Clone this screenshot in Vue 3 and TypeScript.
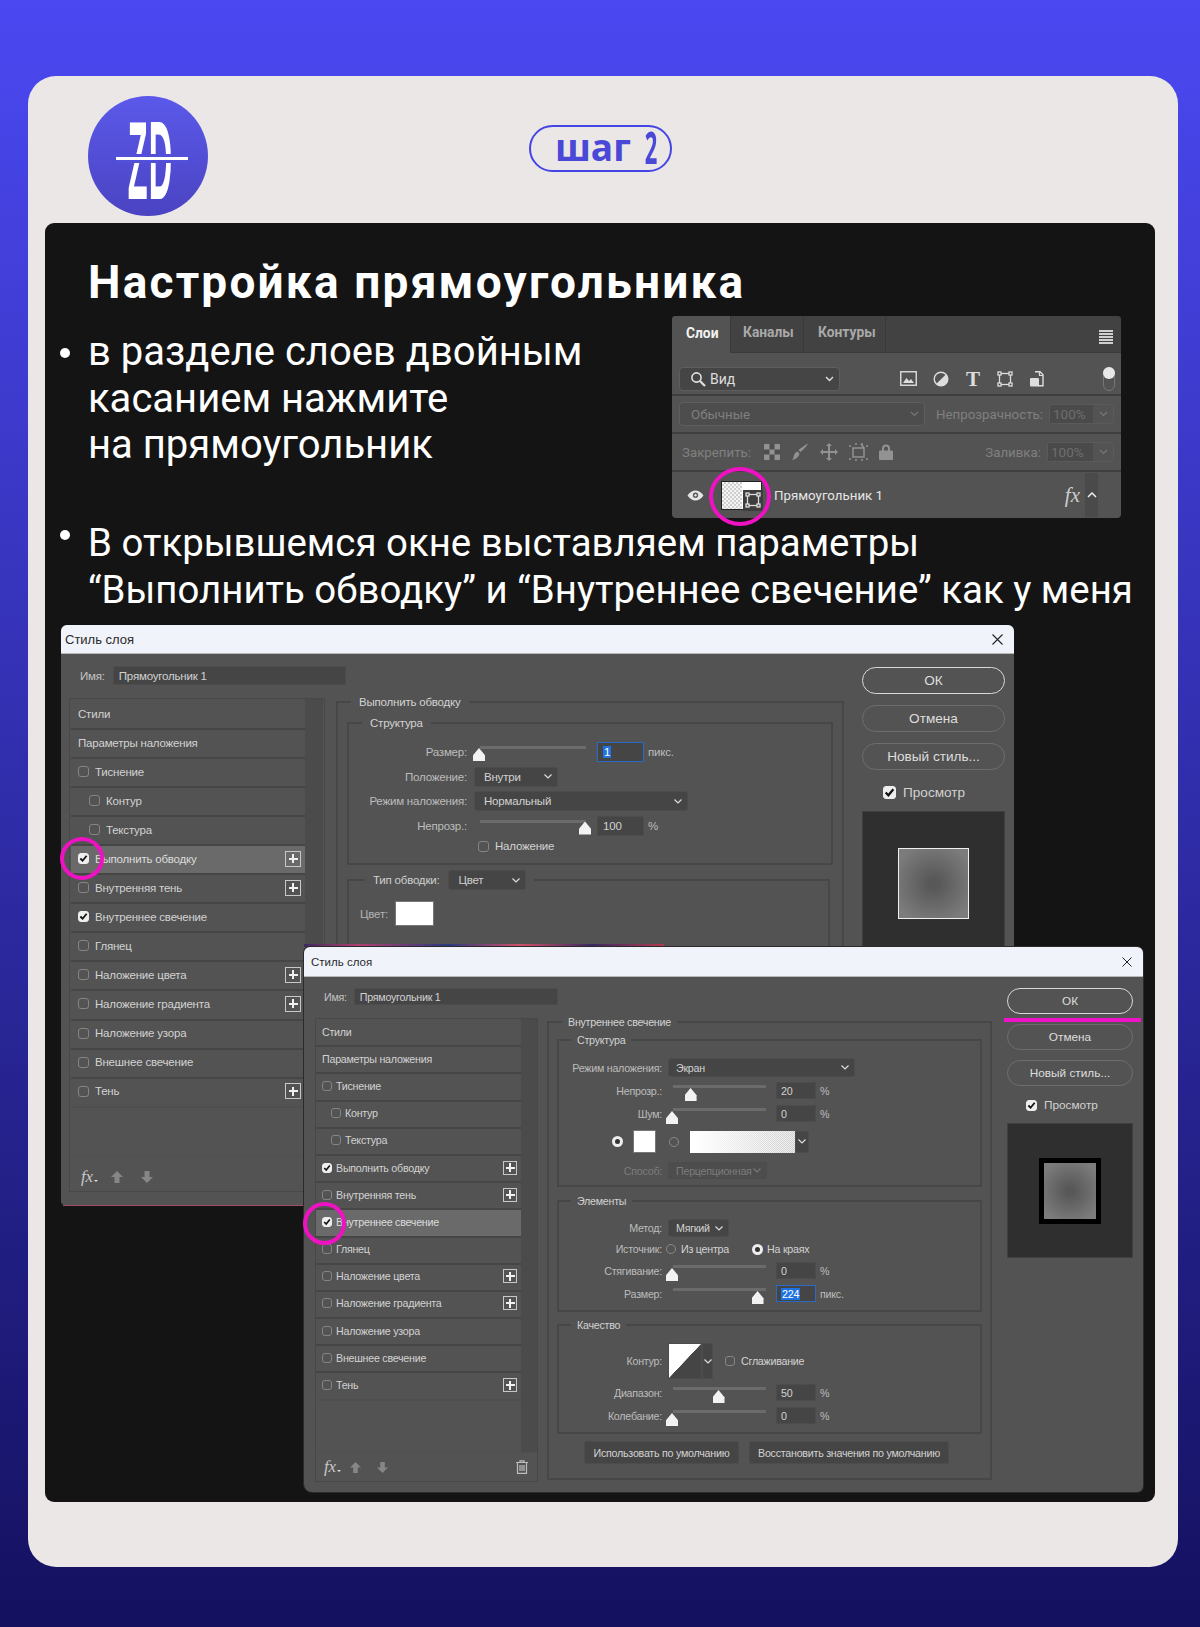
<template>
  <div class="page">
    <main class="card">
      <header class="top">
        <div class="logo">
          <span class="logo-text">ZD</span>
          <i class="logo-line"></i>
        </div>
        <div class="pill">шаг <span class="pill-num">2</span></div>
      </header>

      <section class="panel">
        <h1 class="title">Настройка прямоугольника</h1>

        <div class="intro">
          <p class="para first">в разделе слоев двойным<br />касанием нажмите<br />на прямоугольник</p>

          <!-- панель слоёв -->
          <div class="layers">
            <div class="tabs">
              <span class="tab on">Слои</span>
              <span class="tab t2">Каналы</span>
              <span class="tab t3">Контуры</span>
              <span class="menu"><i v-for="n in 5" :key="n"></i></span>
            </div>
            <div class="lrow r-filter">
              <div class="drop search">
                <svg width="16" height="16" viewBox="0 0 16 16" fill="none" stroke="#e0e0e0" stroke-width="1.6"><circle cx="6.5" cy="6.5" r="4.6" /><path d="M10 10l5 5" stroke-width="2.2" /></svg>
                <span>Вид</span>
                <svg class="chev" width="9" height="6" viewBox="0 0 9 6" fill="none" stroke="#e0e0e0" stroke-width="1.4"><path d="M1 1l3.5 3.5L8 1" /></svg>
              </div>
              <div class="filter-icons">
                <svg width="17" height="15" viewBox="0 0 17 15"><rect x=".75" y=".75" width="15.5" height="13.5" fill="none" stroke="#ddd" stroke-width="1.4" /><path d="M3 12l3.5-5 2.5 3 2-2 3 4z" fill="#ddd" /></svg>
                <svg width="16" height="16" viewBox="0 0 16 16"><circle cx="8" cy="8" r="6.8" fill="none" stroke="#ddd" stroke-width="1.4" /><path d="M13 3.2A6.8 6.8 0 0 1 3.2 13z" fill="#ddd" /></svg>
                <span class="t-icon">T</span>
                <svg width="16" height="16" viewBox="0 0 16 16" fill="#444" stroke="#ddd" stroke-width="1.3"><rect x="2.5" y="2.5" width="11" height="11" fill="none" /><rect x="1" y="1" width="3" height="3" /><rect x="12" y="1" width="3" height="3" /><rect x="1" y="12" width="3" height="3" /><rect x="12" y="12" width="3" height="3" /></svg>
                <svg width="15" height="16" viewBox="0 0 15 16"><path d="M6 .8h5l3 3v11H9" fill="none" stroke="#ddd" stroke-width="1.4" /><path d="M10.500 1v3.500H14" fill="none" stroke="#ddd" stroke-width="1.2" /><rect x="1" y="7" width="9" height="8.5" rx="1" fill="#ddd" /></svg>
              </div>
              <span class="switch"><i></i></span>
            </div>
            <div class="lrow r-blend">
              <div class="drop blend dim">
                <span>Обычные</span>
                <svg class="chev" width="9" height="6" viewBox="0 0 9 6" fill="none" stroke="#777" stroke-width="1.2"><path d="M1 1l3.5 3.5L8 1" /></svg>
              </div>
              <span class="dim-label op">Непрозрачность:</span>
              <div class="pct"><span>100%</span><b><svg width="9" height="6" viewBox="0 0 9 6" fill="none" stroke="#777" stroke-width="1.2"><path d="M1 1l3.5 3.5L8 1" /></svg></b></div>
            </div>
            <div class="lrow r-lock">
              <span class="dim-label lock-label">Закрепить:</span>
              <div class="lock-icons">
                <svg width="16" height="16" viewBox="0 0 16 16"><rect width="16" height="16" rx="1" fill="#929292" /><path d="M5.500 0h5v5.500h-5zM0 5.500h5.500v5H0zM10.500 5.500H16v5h-5.500zM5.500 10.500h5V16h-5z" fill="#4e4e4e" /></svg>
                <svg width="18" height="18" viewBox="0 0 18 18" fill="#929292"><path d="M17 .5c-1 2.500-4.500 6-7.500 8.500l-2-1.800C10 5 14.500 1.500 17 .5zM6.500 8.500l2 2c-.6 3-3 5.800-7.500 6.500 1.800-1.500 1.300-3.500 2.300-5.500.6-1.500 1.800-2.600 3.200-3z" /></svg>
                <svg width="18" height="18" viewBox="0 0 18 18" fill="#929292"><path d="M9 0l3 3h-2v5h5V6l3 3-3 3v-2h-5v5h2l-3 3-3-3h2v-5H3v2L0 9l3-3v2h5V3H6z" /></svg>
                <svg width="19" height="18" viewBox="0 0 19 18" fill="none" stroke="#929292" stroke-width="1.5"><path d="M4 5h11v9H4z" /><path d="M0 3h2M6 1h2M12 1h2M17 3h2M0 16h2M6 17h2M12 17h2M17 16h2" stroke-dasharray="2 1" /><path d="M12 1l3 4" /></svg>
                <svg width="14" height="16" viewBox="0 0 14 16" fill="#929292"><path d="M3 7V4.500a4 4 0 0 1 8 0V7H9V4.500a2 2 0 0 0-4 0V7z" /><rect y="6.500" width="14" height="9.500" rx="1" /></svg>
              </div>
              <span class="dim-label fill">Заливка:</span>
              <div class="pct"><span>100%</span><b><svg width="9" height="6" viewBox="0 0 9 6" fill="none" stroke="#777" stroke-width="1.2"><path d="M1 1l3.5 3.5L8 1" /></svg></b></div>
            </div>
            <div class="layer-row">
              <svg class="eye" width="17" height="11" viewBox="0 0 17 11"><path d="M.5 5.500C3 2 5.500.5 8.500.5s5.500 1.500 8 5c-2.500 3.500-5 5-8 5s-5.500-1.500-8-5z" fill="#e6e6e6" /><circle cx="8.500" cy="5.200" r="2.600" fill="#535353" /><circle cx="8.500" cy="5.200" r="1.200" fill="#e6e6e6" /></svg>
              <div class="thumb-layer">
                <span class="shape-tag">
                  <svg width="16" height="16" viewBox="0 0 16 16" fill="#444" stroke="#ddd" stroke-width="1.3"><rect x="2.500" y="2.500" width="11" height="11" fill="none" /><rect x="1" y="1" width="3" height="3" /><rect x="12" y="1" width="3" height="3" /><rect x="1" y="12" width="3" height="3" /><rect x="12" y="12" width="3" height="3" /></svg>
                </span>
              </div>
              <span class="layer-name">Прямоугольник 1</span>
              <span class="fx-mark">fx</span>
              <span class="collapse"><svg width="10" height="6" viewBox="0 0 10 6" fill="none" stroke="#eee" stroke-width="1.5"><path d="M1 5l4-4 4 4" /></svg></span>
            </div>
            <i class="ring ring-layer"></i>
          </div>
        </div>

        <p class="para second">В открывшемся окне выставляем параметры<br />“Выполнить обводку” и “Внутреннее свечение” как у меня</p>

        <div class="stage">
          <!-- первое окно -->
          <div class="dlg dlg-a">
            <div class="dlg-title"><span>Стиль слоя</span><svg width="11" height="11" viewBox="0 0 11 11" stroke="#222" stroke-width="1.1"><path d="M.5.5l10 10M10.500.5l-10 10" /></svg></div>
            <div class="dlg-body">
              <div class="dlg-left">
                <div class="name-row"><span class="name-label">Имя:</span><span class="name-input">Прямоугольник 1</span></div>
                <div class="dlg-main">
                  <div class="fx-panel">
                    <ul class="fx-list">
                      <li v-for="row in rowsA" :key="row.label" class="fx-row" :class="{ indent: row.indent, active: row.active }">
                        <span v-if="row.box" class="box" :class="{ on: row.on }"><svg v-if="row.on" viewBox="0 0 10 10" fill="none" stroke="#111" stroke-width="2"><path d="M1.500 5l2.500 2.500L8.500 2" /></svg></span>
                        <span>{{ row.label }}</span>
                        <span v-if="row.plus" class="plus"></span>
                      </li>
                    </ul>
                    <div class="scroll-col"></div>
                    <div class="fx-foot">
                      <span class="fx-btn">fx</span>
                      <svg class="arrow first-arrow" width="12" height="12" viewBox="0 0 12 12" fill="#868686"><path d="M6 0l6 6H8.500v6h-5V6H0z" /></svg>
                      <svg class="arrow" width="12" height="12" viewBox="0 0 12 12" fill="#868686"><path d="M6 12l6-6H8.500V0h-5v6H0z" /></svg>
                    </div>
                  </div>

                  <fieldset class="group">
                    <legend>Выполнить обводку</legend>
                    <fieldset class="sub struct-a">
                      <legend>Структура</legend>
                      <div class="frow">
                        <span class="flabel">Размер:</span>
                        <div class="slider gap-slider"><i class="knob" :style="{ left: '0%' }"></i></div>
                        <span class="num sel"><em>1</em></span><span class="unit">пикс.</span>
                      </div>
                      <div class="frow">
                        <span class="flabel">Положение:</span>
                        <span class="select w-pos">Внутри<svg width="8" height="5" viewBox="0 0 8 5" fill="none" stroke="#ddd" stroke-width="1.2"><path d="M.5.5L4 4 7.500.5" /></svg></span>
                      </div>
                      <div class="frow">
                        <span class="flabel">Режим наложения:</span>
                        <span class="select w-mode">Нормальный<svg width="8" height="5" viewBox="0 0 8 5" fill="none" stroke="#ddd" stroke-width="1.2"><path d="M.5.5L4 4 7.500.5" /></svg></span>
                      </div>
                      <div class="frow">
                        <span class="flabel">Непрозр.:</span>
                        <div class="slider gap-slider"><i class="knob" :style="{ left: '100%' }"></i></div>
                        <span class="num">100</span><span class="unit">%</span>
                      </div>
                      <div class="frow low">
                        <span class="flabel"></span>
                        <span class="box overlay-box"></span><span>Наложение</span>
                      </div>
                    </fieldset>
                    <fieldset class="sub type-a">
                      <legend>
                        <span>Тип обводки:</span>
                        <span class="select w-type">Цвет<svg width="8" height="5" viewBox="0 0 8 5" fill="none" stroke="#ddd" stroke-width="1.2"><path d="M.5.5L4 4 7.500.5" /></svg></span>
                      </legend>
                      <div class="color-row"><span class="color-label">Цвет:</span><i class="swatch"></i></div>
                    </fieldset>
                  </fieldset>
                </div>
              </div>

              <div class="dlg-right">
                <span class="btn ok">ОК</span>
                <span class="btn">Отмена</span>
                <span class="btn">Новый стиль...</span>
                <div class="preview-check"><span class="box on"><svg viewBox="0 0 10 10" fill="none" stroke="#111" stroke-width="2"><path d="M1.500 5l2.500 2.500L8.500 2" /></svg></span>Просмотр</div>
                <div class="preview"><i class="sample"></i></div>
              </div>
            </div>
            <i class="ring ring-a"></i>
            <i class="bleed"></i>
          </div>

          <!-- второе окно -->
          <div class="dlg dlg-b">
            <div class="dlg-title"><span>Стиль слоя</span><svg width="10" height="10" viewBox="0 0 10 10" stroke="#222" stroke-width="1"><path d="M.5.5l9 9M9.500.5l-9 9" /></svg></div>
            <div class="dlg-body">
              <div class="dlg-left">
                <div class="name-row"><span class="name-label">Имя:</span><span class="name-input">Прямоугольник 1</span></div>
                <div class="dlg-main">
                  <div class="fx-panel">
                    <ul class="fx-list">
                      <li v-for="row in rowsB" :key="row.label" class="fx-row" :class="{ indent: row.indent, active: row.active }">
                        <span v-if="row.box" class="box" :class="{ on: row.on }"><svg v-if="row.on" viewBox="0 0 10 10" fill="none" stroke="#111" stroke-width="2"><path d="M1.500 5l2.500 2.500L8.500 2" /></svg></span>
                        <span>{{ row.label }}</span>
                        <span v-if="row.plus" class="plus"></span>
                      </li>
                    </ul>
                    <div class="scroll-col"></div>
                    <div class="fx-foot">
                      <span class="fx-btn">fx</span>
                      <svg class="arrow first-arrow" width="11" height="11" viewBox="0 0 12 12" fill="#868686"><path d="M6 0l6 6H8.500v6h-5V6H0z" /></svg>
                      <svg class="arrow" width="11" height="11" viewBox="0 0 12 12" fill="#868686"><path d="M6 12l6-6H8.500V0h-5v6H0z" /></svg>
                      <svg class="trash" width="12" height="14" viewBox="0 0 12 14" fill="none" stroke="#bdbdbd" stroke-width="1.200"><path d="M0 2.500h12M4 2.500V.8h4v1.700" /><path d="M1.500 2.500h9V13.300h-9zM4 5v6M6 5v6M8 5v6" /></svg>
                    </div>
                  </div>

                  <fieldset class="group">
                    <legend>Внутреннее свечение</legend>
                    <fieldset class="sub struct-b">
                      <legend>Структура</legend>
                      <div class="frow h19">
                        <span class="flabel">Режим наложения:</span>
                        <span class="select w-screen">Экран<svg width="8" height="5" viewBox="0 0 8 5" fill="none" stroke="#ddd" stroke-width="1.2"><path d="M.5.5L4 4 7.500.5" /></svg></span>
                      </div>
                      <div class="frow mt5">
                        <span class="flabel">Непрозр.:</span>
                        <div class="slider"><i class="knob" :style="{ left: '20%' }"></i></div>
                        <span class="num">20</span><span class="unit">%</span>
                      </div>
                      <div class="frow mt6">
                        <span class="flabel">Шум:</span>
                        <div class="slider"><i class="knob" :style="{ left: '0%' }"></i></div>
                        <span class="num">0</span><span class="unit">%</span>
                      </div>
                      <div class="fill-row">
                        <i class="radio on"></i>
                        <i class="swatch"></i>
                        <i class="radio second-radio"></i>
                        <i class="grad"></i>
                        <i class="grad-drop"><svg width="8" height="5" viewBox="0 0 8 5" fill="none" stroke="#ddd" stroke-width="1.2"><path d="M.5.5L4 4 7.500.5" /></svg></i>
                      </div>
                      <div class="frow mt9 disabled">
                        <span class="flabel">Способ:</span>
                        <span class="select w-way">Перцепционная<svg width="8" height="5" viewBox="0 0 8 5" fill="none" stroke="#777" stroke-width="1.2"><path d="M.5.5L4 4 7.500.5" /></svg></span>
                      </div>
                    </fieldset>

                    <fieldset class="sub elems-b">
                      <legend>Элементы</legend>
                      <div class="frow h18">
                        <span class="flabel">Метод:</span>
                        <span class="select w-method">Мягкий<svg width="8" height="5" viewBox="0 0 8 5" fill="none" stroke="#ddd" stroke-width="1.2"><path d="M.5.5L4 4 7.500.5" /></svg></span>
                      </div>
                      <div class="frow mt5 h14">
                        <span class="flabel">Источник:</span>
                        <i class="radio src-radio"></i><span class="src-text">Из центра</span>
                        <i class="radio on src-radio2"></i><span>На краях</span>
                      </div>
                      <div class="frow mt6">
                        <span class="flabel">Стягивание:</span>
                        <div class="slider"><i class="knob" :style="{ left: '0%' }"></i></div>
                        <span class="num">0</span><span class="unit">%</span>
                      </div>
                      <div class="frow mt6">
                        <span class="flabel">Размер:</span>
                        <div class="slider"><i class="knob" :style="{ left: '92%' }"></i></div>
                        <span class="num sel"><em>224</em></span><span class="unit">пикс.</span>
                      </div>
                    </fieldset>

                    <fieldset class="sub quality-b">
                      <legend>Качество</legend>
                      <div class="frow h36">
                        <span class="flabel">Контур:</span>
                        <i class="curve"></i>
                        <i class="curve-drop"><svg width="8" height="5" viewBox="0 0 8 5" fill="none" stroke="#ddd" stroke-width="1.2"><path d="M.5.5L4 4 7.500.5" /></svg></i>
                        <span class="box aa-box"></span><span>Сглаживание</span>
                      </div>
                      <div class="frow mt5">
                        <span class="flabel">Диапазон:</span>
                        <div class="slider"><i class="knob" :style="{ left: '50%' }"></i></div>
                        <span class="num">50</span><span class="unit">%</span>
                      </div>
                      <div class="frow mt6">
                        <span class="flabel">Колебание:</span>
                        <div class="slider"><i class="knob" :style="{ left: '0%' }"></i></div>
                        <span class="num">0</span><span class="unit">%</span>
                      </div>
                    </fieldset>

                    <div class="default-btns">
                      <span class="dbtn use">Использовать по умолчанию</span>
                      <span class="dbtn reset">Восстановить значения по умолчанию</span>
                    </div>
                  </fieldset>
                </div>
              </div>

              <div class="dlg-right">
                <span class="btn ok">ОК</span>
                <i class="ok-mark"></i>
                <span class="btn">Отмена</span>
                <span class="btn">Новый стиль...</span>
                <div class="preview-check"><span class="box on"><svg viewBox="0 0 10 10" fill="none" stroke="#111" stroke-width="2"><path d="M1.500 5l2.500 2.500L8.500 2" /></svg></span>Просмотр</div>
                <div class="preview"><i class="sample"></i></div>
              </div>
            </div>
            <i class="ring ring-b"></i>
          </div>
        </div>
      </section>
    </main>
  </div>
</template>

<script setup lang="ts">
interface StyleRow {
  label: string
  box?: boolean
  on?: boolean
  indent?: boolean
  plus?: boolean
  active?: boolean
}

const baseRows: StyleRow[] = [
  { label: 'Стили' },
  { label: 'Параметры наложения' },
  { label: 'Тиснение', box: true },
  { label: 'Контур', box: true, indent: true },
  { label: 'Текстура', box: true, indent: true },
  { label: 'Выполнить обводку', box: true, on: true, plus: true },
  { label: 'Внутренняя тень', box: true, plus: true },
  { label: 'Внутреннее свечение', box: true, on: true },
  { label: 'Глянец', box: true },
  { label: 'Наложение цвета', box: true, plus: true },
  { label: 'Наложение градиента', box: true, plus: true },
  { label: 'Наложение узора', box: true },
  { label: 'Внешнее свечение', box: true },
  { label: 'Тень', box: true, plus: true },
]

// в каждом окне подсвечена своя строка
const withActive = (label: string): StyleRow[] =>
  baseRows.map(row => ({ ...row, active: row.label === label }))

const rowsA = withActive('Выполнить обводку')
const rowsB = withActive('Внутреннее свечение')
</script>

<style>
html,
body {
  margin: 0;
  padding: 0;
}
</style>

<style scoped>
.page {
  height: 1627px;
  padding: 76px 22px 60px 28px;
  box-sizing: border-box;
  background: linear-gradient(180deg, #4b48f2 0%, #141160 100%);
  font-family: Roboto, "Liberation Sans", sans-serif;
}

.card {
  height: 1491px;
  box-sizing: border-box;
  padding: 20px 23px 65px 17px;
  background: #ebe7e6;
  border-radius: 28px;
}

/* ----- шапка ----- */
.top {
  display: flex;
  height: 127px;
  padding-left: 43px;
}

.logo {
  position: relative;
  flex: none;
  width: 120px;
  height: 120px;
  border-radius: 50%;
  background: linear-gradient(180deg, #5b59ea, #4a43c2);
  display: flex;
  align-items: center;
  justify-content: center;
}

.logo-text {
  flex: none;
  font-family: "Liberation Sans", sans-serif;
  font-weight: 700;
  font-size: 112px;
  line-height: 112px;
  color: #fff;
  transform: translate(3px, 5px) scaleX(0.29);
  letter-spacing: 4px;
}

.logo-line {
  position: absolute;
  left: 28px;
  right: 20px;
  top: 61px;
  height: 3px;
  background: #fff;
  box-shadow: 0 -3px 0 #5250d8, 0 3px 0 #5250d8;
}

.pill {
  margin: 29px 0 0 321px;
  width: 143px;
  height: 47px;
  box-sizing: border-box;
  border: 2.500px solid #4545e6;
  border-radius: 24px;
  display: flex;
  align-items: center;
  gap: 14px;
  padding: 0 0 4px 24px;
  font-family: "Open Sans", sans-serif;
  font-weight: 700;
  font-size: 37px;
  line-height: 1;
  color: #4a48d6;
}

.pill-num {
  font-size: 44px;
  transform: scaleX(0.5);
  width: 12px;
  display: inline-flex;
  justify-content: center;
}

/* ----- тёмная панель ----- */
.panel {
  height: 1279px;
  background: #141414;
  border-radius: 9px;
  color: #fff;
}

.title {
  margin: 0;
  padding: 31px 0 0 43px;
  font-size: 46px;
  line-height: 56px;
  font-weight: 700;
  letter-spacing: 2.2px;
}

.intro {
  display: flex;
  margin-top: 6px;
  height: 202px;
}

.para {
  position: relative;
  margin: 0;
  padding-left: 43px;
  line-height: 46.500px;
  white-space: nowrap;
}

.para::before {
  content: '';
  position: absolute;
  left: 15px;
  width: 10px;
  height: 10px;
  border-radius: 50%;
  background: #fff;
}

.para.first {
  padding-top: 13px;
  flex: 1;
  font-size: 40px;
}

.para.first::before {
  top: 32px;
}

.para.second {
  padding-top: 2px;
  height: 107px;
  box-sizing: border-box;
  font-size: 38.400px;
}

.para.second::before {
  top: 12px;
}

/* ----- панель слоёв ----- */
.layers {
  position: relative;
  width: 449px;
  margin-right: 34px;
  height: 202px;
  flex: none;
  background: #535353;
  border-radius: 4px;
  font-size: 13.300px;
  color: #ddd;
}

.tabs {
  height: 37px;
  display: flex;
  align-items: stretch;
  background: #424242;
  border-radius: 4px 4px 0 0;
  border-bottom: 1px solid #3a3a3a;
  box-sizing: border-box;
}

.tab {
  display: flex;
  align-items: center;
  font-weight: 700;
  font-size: 13.800px;
  color: #a9a9a9;
  padding-bottom: 4px;
  box-sizing: border-box;
  border-right: 1px solid #393939;
}

.tab.on {
  width: 59px;
  padding-left: 14px;
  background: #535353;
  color: #f2f2f2;
  margin-bottom: -1px;
  border-radius: 4px 0 0 0;
}

.tab.t2 {
  width: 73px;
  padding-left: 12px;
}

.tab.t3 {
  width: 82px;
  padding-left: 14px;
}

.menu {
  margin: 14px 8px 0 auto;
  display: flex;
  flex-direction: column;
  gap: 1.500px;
}

.menu i {
  display: block;
  width: 14px;
  height: 1.500px;
  background: #cfcfcf;
}

.lrow {
  display: flex;
  align-items: center;
  box-sizing: border-box;
  border-bottom: 2px solid #3e3e3e;
  padding-left: 7px;
}

.r-filter {
  height: 43px;
  padding-top: 10px;
}

.r-blend,
.r-lock {
  height: 38px;
}

.drop {
  display: flex;
  align-items: center;
  box-sizing: border-box;
  border: 1px solid #5e5e5e;
  border-radius: 4px;
  background: #454545;
}

.search {
  width: 161px;
  height: 24px;
  padding: 0 5px 0 10px;
  gap: 4px;
  font-size: 14px;
}

.chev {
  margin-left: auto;
}

.filter-icons {
  display: flex;
  align-items: center;
  margin-left: 60px;
  gap: 16px;
}

.t-icon {
  width: 16px;
  text-align: center;
  font-family: "Liberation Serif", serif;
  font-weight: 700;
  font-size: 21px;
  line-height: 16px;
  color: #ddd;
}

.switch {
  position: relative;
  margin-left: 59px;
  width: 12px;
  height: 24px;
  box-sizing: border-box;
  border: 1px solid #777;
  border-radius: 7px;
}

.switch i {
  position: absolute;
  left: -1px;
  top: -1px;
  width: 12px;
  height: 12px;
  border-radius: 50%;
  background: #e8e8e8;
}

.blend {
  flex: none;
  width: 246px;
  height: 24px;
  padding: 0 5px 0 11px;
  background: #4d4d4d;
  color: #808080;
}

.dim-label {
  color: #808080;
}

.op {
  margin-left: 11px;
}

.pct {
  display: flex;
  margin-left: 6px;
  width: 67px;
  height: 20px;
  box-sizing: border-box;
  border: 1px solid #5a5a5a;
  border-radius: 3px;
  color: #6e6e6e;
  font-size: 13.500px;
}

.pct span {
  flex: 1;
  padding-left: 3px;
  background: #4a4a4a;
  line-height: 18px;
}

.pct b {
  width: 20px;
  display: flex;
  align-items: center;
  justify-content: center;
}

.lock-label {
  margin-left: 3px;
}

.lock-icons {
  display: flex;
  align-items: center;
  margin-left: 13px;
  gap: 11px;
}

.fill {
  margin-left: auto;
}

.r-lock .pct,
.r-blend .pct {
  margin-right: 7px;
}

.layer-row {
  height: 46px;
  display: flex;
  align-items: center;
  padding-left: 15px;
  box-sizing: border-box;
}

.thumb-layer {
  position: relative;
  margin-left: 17px;
  width: 41px;
  height: 29px;
  box-sizing: border-box;
  border: 1px solid #222;
  background: linear-gradient(90deg, transparent 52%, #fff 52%),
    repeating-conic-gradient(#cfcfcf 0 25%, #f4f4f4 0 50%) 0 0 / 4px 4px;
}

.shape-tag {
  position: absolute;
  right: -2px;
  bottom: -2px;
  width: 20px;
  height: 21px;
  display: flex;
  align-items: center;
  justify-content: center;
  background: #3d3d3d;
}

.layer-name {
  margin-left: 12px;
  color: #e6e6e6;
}

.fx-mark {
  margin-left: auto;
  font-family: "Liberation Serif", serif;
  font-style: italic;
  font-size: 21px;
  color: #ccc;
}

.collapse {
  margin: 0 23px 0 5px;
  width: 13px;
  height: 44px;
  background: #4a4a4a;
  display: flex;
  align-items: center;
  justify-content: center;
}

/* ----- кольца-пометки ----- */
.ring {
  position: absolute;
  box-sizing: border-box;
  border: 4.500px solid #ee12c2;
  border-radius: 50%;
  z-index: 3;
}

.ring-layer {
  left: 37px;
  top: 151px;
  width: 62px;
  height: 59px;
}

.ring-a {
  left: -1px;
  top: 212px;
  width: 44px;
  height: 43px;
}

.ring-b {
  left: -1px;
  top: 255px;
  width: 43px;
  height: 43px;
}

/* ----- окна ----- */
.stage {
  position: relative;
  height: 875px;
}

.dlg {
  position: absolute;
  font-family: "Liberation Sans", sans-serif;
  font-size: 11.500px;
  letter-spacing: -0.2px;
  color: #d2d2d2;
  background: #535353;
  border-radius: 6px 6px 0 0;
}

.dlg-a {
  left: 16px;
  top: 0;
  width: 953px;
  height: 580px;
  --lw: 118px;
  --lg: 7px;
  border-bottom-left-radius: 4px;
}

.dlg-b {
  left: 259px;
  top: 322px;
  width: 839px;
  height: 545px;
  font-size: 10.700px;
  letter-spacing: -0.25px;
  border-radius: 6px 6px 6px 8px;
  box-shadow: 0 0 0 1px #2a2a2a;
  --lw: 103px;
  --lg: 6px;
}

.dlg-title {
  display: flex;
  align-items: center;
  justify-content: space-between;
  height: 29px;
  padding: 0 11px 0 4px;
  background: #f1f3fa;
  color: #2a2a2a;
  border-radius: 6px 6px 0 0;
  border-bottom: 1px solid #b8b8b8;
  box-sizing: border-box;
  font-size: 13px;
  letter-spacing: 0;
}

.dlg-b .dlg-title {
  height: 30px;
  padding: 0 11px 0 7px;
  font-size: 11.500px;
}

.dlg-body {
  display: flex;
}

.dlg-a .dlg-left {
  padding-left: 8px;
}

.dlg-b .dlg-left {
  padding-left: 11px;
}

.name-row {
  display: flex;
  align-items: center;
}

.dlg-a .name-row {
  margin-top: 12px;
  height: 19px;
  padding-left: 11px;
  gap: 8px;
}

.dlg-b .name-row {
  margin-top: 11px;
  height: 17px;
  padding-left: 9px;
  gap: 7px;
}

.name-label {
  color: #c4c4c4;
}

.name-input {
  align-self: stretch;
  display: flex;
  align-items: center;
  box-sizing: border-box;
  padding-left: 5px;
  background: #454545;
  border: 1px solid #4c4c4c;
}

.dlg-a .name-input {
  width: 233px;
}

.dlg-b .name-input {
  width: 204px;
}

.dlg-main {
  display: flex;
  align-items: flex-start;
}

.dlg-a .dlg-main {
  margin-top: 13px;
  gap: 11px;
}

.dlg-b .dlg-main {
  margin-top: 13px;
  gap: 9px;
}

/* список стилей */
.fx-panel {
  display: grid;
  box-sizing: border-box;
  border: 1px solid #484848;
}

.dlg-a .fx-panel {
  width: 256px;
  height: 494px;
  padding-left: 1px;
  grid-template-columns: 234px 18px;
  grid-template-rows: 1fr 35px;
}

.dlg-b .fx-panel {
  width: 223px;
  height: 464px;
  grid-template-columns: 205px 16px;
  grid-template-rows: 1fr 29px;
}

.fx-list {
  list-style: none;
  margin: 0;
  padding: 1px 0 0;
}

.dlg-a .fx-list {
  padding-top: 2px;
}

.fx-row {
  display: flex;
  align-items: center;
  box-sizing: border-box;
  white-space: nowrap;
}

.dlg-a .fx-row {
  height: 29.050px;
  padding: 0 4px 2px 7px;
  border-bottom: 2px solid #464646;
}

.dlg-b .fx-row {
  height: 27.200px;
  padding: 0 4px 2px 6px;
  border-bottom: 2px solid #464646;
}

.fx-row:last-child {
  border-bottom-color: #4f4f4f !important;
}

.fx-row.active {
  background: #6a6a6a;
  color: #dcdcdc;
}

.dlg-a .fx-row.indent {
  padding-left: 18px;
}

.dlg-b .fx-row.indent {
  padding-left: 15px;
}

.box {
  flex: none;
  box-sizing: border-box;
  display: inline-flex;
  width: 11px;
  height: 11px;
  border: 1.300px solid #858585;
  border-radius: 3px;
}

.dlg-a .fx-row .box {
  margin-right: 6px;
}

.dlg-b .fx-row .box {
  width: 10px;
  height: 10px;
  margin-right: 4px;
}

.box.on {
  background: #eee;
  border-color: #eee;
}

.box svg {
  width: 100%;
  height: 100%;
}

.plus {
  position: relative;
  margin-left: auto;
  box-sizing: border-box;
  width: 16px;
  height: 16px;
  border: 1.500px solid #c8c8c8;
  background: linear-gradient(#f0f0f0, #f0f0f0) center / 9px 2px no-repeat,
    linear-gradient(#f0f0f0, #f0f0f0) center / 2px 9px no-repeat;
}

.dlg-b .plus {
  width: 14px;
  height: 14px;
}

.scroll-col {
  background: #4b4b4b;
}

.fx-foot {
  grid-column: 1 / 3;
  display: flex;
  align-items: center;
  border-top: 1px solid #505050;
  background: #535353;
}

.fx-btn {
  font-family: "Liberation Serif", serif;
  font-style: italic;
  font-size: 17px;
  color: #c8c8c8;
  position: relative;
}

.fx-btn::after {
  content: '';
  position: absolute;
  right: -5px;
  bottom: 3px;
  border: 2px solid transparent;
  border-top: 2.500px solid #ddd;
}

.dlg-a .fx-foot {
  padding: 5px 0 0 10px;
}

.dlg-b .fx-foot {
  padding-left: 8px;
}

.arrow {
  margin-left: 18px;
}

.dlg-a .first-arrow {
  margin-left: 18px;
}

.dlg-b .arrow {
  margin-left: 16px;
}

.dlg-b .first-arrow {
  margin-left: 14px;
}

.trash {
  margin-left: auto;
  margin-right: 9px;
}

/* группы */
fieldset {
  margin: 0;
  padding: 0;
  min-width: 0;
  border: 2px solid #474747;
}

.dlg-a legend {
  margin-left: 13px;
  padding: 0 8px;
  line-height: 16px;
}

.dlg-b legend {
  margin-left: 12px;
  padding: 0 6px;
  line-height: 14px;
}

.dlg-a .group {
  width: 508px;
  height: 510px;
  box-sizing: border-box;
  margin-top: -4px;
  padding: 5px 9px 0;
}

.dlg-a .group > legend {
  margin-left: 4px;
}

.dlg-b .group {
  width: 445px;
  height: 465px;
  box-sizing: border-box;
  margin-top: -3px;
  padding: 4px 8px 0;
}

.dlg-b .group > legend {
  margin-left: 5px;
}

.struct-a {
  padding: 11px 0;
}

.struct-a .frow + .frow {
  margin-top: 4.500px;
}

.frow {
  display: flex;
  align-items: center;
}

.dlg-a .frow {
  height: 20px;
}

.dlg-b .frow {
  height: 17px;
}

.dlg-a .frow.low {
  height: 12px;
}

.dlg-b .frow.h19 {
  height: 19px;
}

.dlg-b .frow.h18 {
  height: 18px;
}

.dlg-b .frow.h14 {
  height: 14px;
}

.dlg-b .frow.h36 {
  height: 36px;
}

.mt5 { margin-top: 5px; }
.mt6 { margin-top: 6px; }
.mt9 { margin-top: 9px; }

.flabel {
  flex: none;
  width: var(--lw);
  margin-right: var(--lg);
  text-align: right;
  color: #bcbcbc;
  white-space: nowrap;
}

.select {
  align-self: stretch;
  display: flex;
  align-items: center;
  justify-content: space-between;
  box-sizing: border-box;
  padding: 0 5px 0 9px;
  background: #454545;
  border: 1px solid #4c4c4c;
  border-radius: 3px;
  white-space: nowrap;
}

.w-pos { width: 84px; }
.w-mode { width: 214px; }
.w-type { width: 78px; height: 20px; }
.w-screen { width: 187px; padding-left: 7px; }
.w-way { width: 99px; padding-left: 7px; background: #4d4d4d; color: #7c7c7c; }
.w-method { width: 61px; padding-left: 7px; }

.disabled .flabel {
  color: #7c7c7c;
}

.slider {
  position: relative;
  flex: none;
  align-self: stretch;
}

.dlg-a .slider {
  width: 106px;
  margin: 0 11px 0 6px;
}

.dlg-b .slider {
  width: 93px;
  margin: 0 10px 0 5px;
}

.slider::before {
  content: '';
  position: absolute;
  left: 0;
  right: 0;
  top: 4px;
  height: 3px;
  background: #6b6b6b;
}

.dlg-b .slider::before {
  top: 3px;
}

.knob {
  position: absolute;
  top: 6px;
  width: 12px;
  height: 13px;
  margin-left: -7px;
  background: #f2f2f2;
  clip-path: polygon(50% 0, 100% 55%, 100% 100%, 0 100%, 0 55%);
  filter: drop-shadow(0 1px 0 #111);
}

.num {
  box-sizing: border-box;
  align-self: stretch;
  display: flex;
  align-items: center;
  padding-left: 5px;
  background: #454545;
  border: 1px solid #4c4c4c;
}

.dlg-a .num {
  width: 47px;
}

.dlg-b .num {
  width: 40px;
  padding-left: 4px;
}

.num.sel {
  border-color: #2a69c4;
}

.num em {
  font-style: normal;
  background: #1f73e0;
  color: #fff;
  padding: 0 1px;
}

.unit {
  margin-left: 4px;
  color: #bcbcbc;
}

.overlay-box {
  margin: 0 6px 0 4px;
}

.type-a {
  margin: 5px 3px 0 0;
  height: 200px;
}

.type-a legend {
  display: flex;
  align-items: center;
  gap: 9px;
  margin-left: 16px;
  color: #cfcfcf;
}

.color-row {
  display: flex;
  align-items: center;
  margin: 11px 0 0 11px;
  gap: 7px;
}

.color-label {
  color: #b4b4b4;
}

.swatch {
  display: block;
  box-sizing: border-box;
  background: #fff;
  border: 1px solid #777;
}

.dlg-a .swatch {
  width: 39px;
  height: 25px;
}

.dlg-b .swatch {
  width: 23px;
  height: 23px;
}

.struct-b {
  padding: 11px 0 6px;
}

.fill-row {
  display: flex;
  align-items: center;
  height: 23px;
  margin: 8px 0 0 53px;
}

.radio {
  flex: none;
  display: block;
  box-sizing: border-box;
  width: 10px;
  height: 10px;
  border: 1px solid #8a8a8a;
  border-radius: 50%;
}

.radio.on {
  width: 11px;
  height: 11px;
  border: 3.300px solid #eee;
  background: #333;
}

.fill-row .swatch {
  margin-left: 10px;
}

.second-radio {
  margin-left: 13px;
}

.grad {
  display: block;
  margin-left: 11px;
  width: 105px;
  height: 22px;
  background: linear-gradient(90deg, #fff 5%, rgba(255, 255, 255, 0)),
    repeating-conic-gradient(#cfcfcf 0 25%, #eeeeee 0 50%) 0 0 / 2px 2px;
}

.grad-drop,
.curve-drop {
  display: flex;
  align-items: center;
  justify-content: center;
  width: 14px;
  height: 22px;
  background: #454545;
  box-sizing: border-box;
  border: 1px solid #4c4c4c;
}

.elems-b {
  margin-top: 7px;
  padding: 11px 0 8px;
}

.src-radio {
  margin: 0 5px 0 -2px;
}

.src-text {
  width: 71px;
  white-space: nowrap;
}

.src-radio2 {
  margin-right: 4px;
}

.quality-b {
  margin-top: 6px;
  padding: 11px 0 8px;
}

.curve {
  display: block;
  width: 34px;
  height: 36px;
  box-sizing: border-box;
  background: linear-gradient(to bottom right, #fff 49.500%, #454545 50.500%);
  border: 1px solid #4c4c4c;
}

.curve-drop {
  width: 11px;
  height: 36px;
}

.aa-box {
  margin: 0 6px 0 12px;
  width: 10px;
  height: 10px;
}

.default-btns {
  display: flex;
  gap: 10px;
  margin: 7px 0 0 27px;
  height: 23px;
}

.dbtn {
  display: flex;
  align-items: center;
  justify-content: center;
  box-sizing: border-box;
  white-space: nowrap;
  background: #454545;
  border: 1px solid #4c4c4c;
  border-radius: 2px;
}

.use { width: 155px; }
.reset { width: 200px; }

/* правая колонка */
.dlg-right {
  position: relative;
  display: flex;
  flex-direction: column;
  flex: none;
}

.dlg-a .dlg-right {
  width: 143px;
  margin: 13px 0 0 18px;
  gap: 11px;
  font-size: 13.600px;
  letter-spacing: 0;
}

.dlg-b .dlg-right {
  width: 126px;
  margin: 11px 0 0 15px;
  gap: 10px;
  font-size: 11.800px;
  letter-spacing: 0;
}

.btn {
  display: flex;
  align-items: center;
  justify-content: center;
  box-sizing: border-box;
  border: 1.500px solid #6e6e6e;
  border-radius: 14px;
  color: #dedede;
}

.dlg-a .btn {
  height: 27px;
}

.dlg-b .btn {
  height: 26px;
}

.btn.ok {
  border-color: #d8d8d8;
}

.preview-check {
  display: flex;
  align-items: center;
  height: 16px;
}

.dlg-a .preview-check {
  gap: 7px;
  padding-left: 21px;
  margin-top: 3px;
}

.dlg-a .preview-check .box {
  width: 13px;
  height: 13px;
}

.dlg-b .preview-check {
  gap: 7px;
  padding-left: 19px;
  margin-top: 1px;
}

.preview {
  display: flex;
  align-items: center;
  justify-content: center;
  background: #2f2f2f;
  border: 1px solid #3f3f3f;
  box-sizing: border-box;
}

.dlg-a .preview {
  height: 136px;
  align-items: flex-start;
  padding-top: 36px;
}

.dlg-b .preview {
  height: 135px;
  align-items: flex-start;
  padding-top: 34px;
}

.sample {
  display: block;
  box-sizing: border-box;
  background: radial-gradient(circle, #585858 10%, #7c7c7c 85%);
}

.dlg-a .sample {
  width: 71px;
  height: 71px;
  border: 1.500px solid #f0f0f0;
}

.dlg-b .sample {
  width: 62px;
  height: 66px;
  border: 5px solid #000;
}

.ok-mark {
  position: absolute;
  left: -3px;
  top: 30px;
  width: 137px;
  height: 3.500px;
  background: #f012c8;
}

.bleed {
  position: absolute;
  left: 243px;
  top: 319px;
  width: 360px;
  height: 3px;
  background: linear-gradient(90deg, #3d2a60, #b04070 15%, #2a3a80 40%, #d0506a 60%, #3a2a60 80%, #b03a50);
}

.dlg-a::after {
  content: '';
  position: absolute;
  left: 2px;
  width: 245px;
  bottom: -1px;
  height: 1px;
  background: #a04a6e;
}
</style>
